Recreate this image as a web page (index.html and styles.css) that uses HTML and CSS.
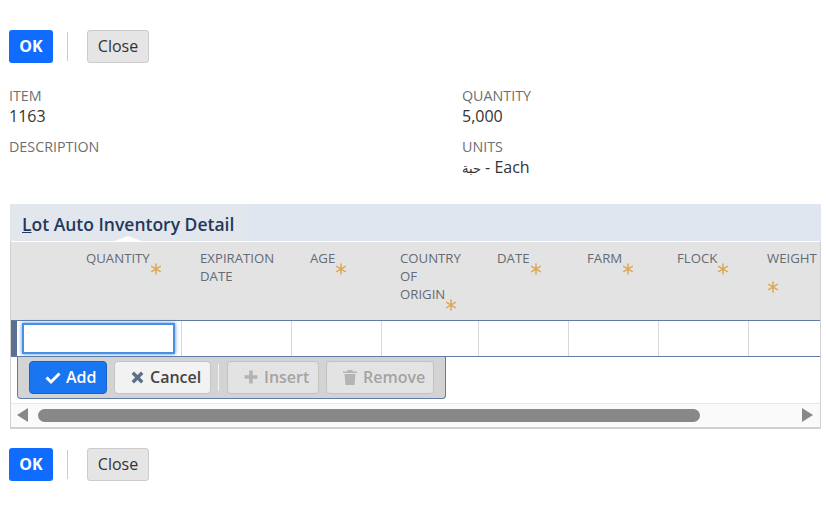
FILE: index.html
```html
<!DOCTYPE html>
<html>
<head>
    <title>Lot Auto Inventory Detail</title>
    <link rel="stylesheet" href="styles.css">
</head>
<body>
    <svg class="defs" width="0" height="0">
        <symbol id="star" viewBox="0 0 12 12">
            <path d="M6 0.5V11.5M1.2 3.2L10.8 8.8M10.8 3.2L1.2 8.8" stroke="#dba755" stroke-width="1.5" fill="none"/>
        </symbol>
    </svg>

    <div class="toolbar">
        <button class="btn btn-ok">OK</button>
        <span class="divider"></span>
        <button class="btn btn-close">Close</button>
    </div>

    <div class="fields">
        <div class="field-col">
            <div class="field">
                <div class="field-label">ITEM</div>
                <div class="field-value">1163</div>
            </div>
            <div class="field">
                <div class="field-label">DESCRIPTION</div>
            </div>
        </div>
        <div class="field-col">
            <div class="field">
                <div class="field-label">QUANTITY</div>
                <div class="field-value">5,000</div>
            </div>
            <div class="field">
                <div class="field-label">UNITS</div>
                <div class="field-value"><span class="arabic">حبة</span> - Each</div>
            </div>
        </div>
    </div>

    <div class="section">
        <div class="tab-band">
            <div class="tab"><span class="tab-key">L</span>ot Auto Inventory Detail</div>
        </div>
        <div class="grid-box">
            <div class="head-row">
                <div class="head-cell col-qty">QUANTITY<svg class="star"><use href="#star"/></svg></div>
                <div class="head-cell col-exp">EXPIRATION DATE</div>
                <div class="head-cell col-age">AGE<svg class="star"><use href="#star"/></svg></div>
                <div class="head-cell col-country">COUNTRY OF ORIGIN<svg class="star"><use href="#star"/></svg></div>
                <div class="head-cell col-std">DATE<svg class="star"><use href="#star"/></svg></div>
                <div class="head-cell col-std">FARM<svg class="star"><use href="#star"/></svg></div>
                <div class="head-cell col-std">FLOCK<svg class="star"><use href="#star"/></svg></div>
                <div class="head-cell col-last">WEIGHT<svg class="star"><use href="#star"/></svg></div>
            </div>
            <div class="edit-row">
                <div class="edit-cell col-qty"><input class="qty-input" type="text"></div>
                <div class="edit-cell col-exp"></div>
                <div class="edit-cell col-age"></div>
                <div class="edit-cell col-country"></div>
                <div class="edit-cell col-std"></div>
                <div class="edit-cell col-std"></div>
                <div class="edit-cell col-std"></div>
                <div class="edit-cell col-last"></div>
            </div>
            <div class="action-bar">
                <button class="act act-add">
                    <svg class="act-icon" viewBox="0 0 16 16"><path d="M1.5 8.5L6 13L14.5 4.5" stroke="#fff" stroke-width="3" fill="none"/></svg>Add
                </button>
                <button class="act act-cancel">
                    <svg class="act-icon" viewBox="0 0 16 16"><path d="M3 3L13 13M13 3L3 13" stroke="#5b6f87" stroke-width="3.6" fill="none"/></svg>Cancel
                </button>
                <span class="act-sep"></span>
                <button class="act act-off act-insert">
                    <svg class="act-icon" viewBox="0 0 16 16"><path d="M8 1.500V14.500M1.500 8H14.500" stroke="#b4b4b4" stroke-width="3.6" fill="none"/></svg>Insert
                </button>
                <button class="act act-off act-remove">
                    <svg class="act-icon" viewBox="0 0 16 16"><path d="M1 2.500H15V4H1ZM5.500 1H10.500V2.500H5.500ZM2.500 5H13.500L12.500 16H3.500Z" fill="#b4b4b4"/></svg>Remove
                </button>
            </div>
            <div class="scroll-row">
                <span class="arrow arrow-left"></span>
                <div class="scroll-track"><div class="scroll-thumb"></div></div>
                <span class="arrow arrow-right"></span>
            </div>
        </div>
    </div>

    <div class="toolbar toolbar-bottom">
        <button class="btn btn-ok">OK</button>
        <span class="divider"></span>
        <button class="btn btn-close">Close</button>
    </div>
</body>
</html>
```

FILE: styles.css
```css
body {
    font-family: "Open Sans", "DejaVu Sans", sans-serif;
    background-color: #fff;
    color: #333;
    margin: 0;
    padding: 30px 5px 0 9px;
}

.defs {
    display: block;
    height: 0;
}

.toolbar {
    display: flex;
    align-items: center;
    height: 33px;
}

.toolbar-bottom {
    margin-top: 19px;
}

.btn {
    height: 33px;
    padding: 0 0 2px;
    font-family: inherit;
    font-size: 16px;
    border-radius: 3px;
}

.btn-ok {
    width: 44px;
    background-color: #0f6cff;
    border: none;
    color: #fff;
    font-weight: 700;
}

.btn-close {
    width: 62px;
    background-color: #e5e5e5;
    border: 1px solid #ccc;
    color: #333;
}

.divider {
    width: 1px;
    height: 29px;
    margin: 0 19px 0 14px;
    background-color: #ccc;
}

.fields {
    display: grid;
    grid-template-columns: 453px 1fr;
    margin-top: 24px;
}

.field {
    margin-bottom: 11px;
}

.field-label {
    font-size: 14.300px;
    line-height: 18px;
    color: #6f6f6f;
}

.field-value {
    font-size: 16px;
    line-height: 22px;
    color: #333;
}

.arabic {
    font-size: 13px;
}

.section {
    margin-top: 14px;
    margin-left: 1px;
    width: 811px;
}

.tab-band {
    height: 37px;
    background-color: #dfe6f0;
}

.tab {
    position: relative;
    box-sizing: border-box;
    width: 237px;
    height: 37px;
    padding-left: 12px;
    font-size: 17.500px;
    font-weight: 600;
    line-height: 40px;
    color: #24385b;
    background-color: #e2e6ed;
    white-space: nowrap;
}

.tab-key {
    text-decoration: underline;
}

.tab::after {
    content: "";
    position: absolute;
    left: 105px;
    bottom: 0;
    border-left: 13px solid transparent;
    border-right: 13px solid transparent;
    border-bottom: 5px solid #fff;
}

.grid-box {
    box-sizing: border-box;
    height: 188px;
    border: 1px solid #d0d0d0;
    border-bottom-width: 2px;
    border-top: none;
    overflow: hidden;
}

.head-row {
    display: flex;
    height: 79px;
    box-sizing: border-box;
    background-color: #e3e3e3;
    border-top: 1px solid #fff;
}

.head-cell {
    box-sizing: border-box;
    padding-top: 7px;
    padding-left: 18px;
    padding-right: 3px;
    font-size: 13.200px;
    line-height: 18px;
    color: #666a73;
}

.col-qty {
    width: 171px;
    flex: none;
}

.col-exp {
    width: 110px;
    flex: none;
}

.col-age {
    width: 90px;
    flex: none;
}

.col-country {
    width: 97px;
    flex: none;
}

.col-std {
    width: 90px;
    flex: none;
}

.col-last {
    width: 70px;
    flex: none;
}

.head-row .col-qty {
    padding-left: 75px;
}

.head-row .col-country {
    padding-right: 16px;
}

.head-row .col-last {
    padding-right: 0;
}

.star {
    display: inline-block;
    width: 12px;
    height: 12px;
    vertical-align: -6px;
    margin-bottom: -6px;
}

.edit-row {
    display: flex;
    box-sizing: border-box;
    height: 37px;
    border-top: 1px solid #5f7ba6;
    border-bottom: 1px solid #5f7ba6;
}

.edit-cell {
    box-sizing: border-box;
    border-right: 1px solid #d8d8d8;
}

.edit-row .col-qty {
    padding: 2px 5px 0;
    border-left: 6px solid #5d6f91;
}

.edit-row .col-last {
    border-right: none;
}

.qty-input {
    display: block;
    box-sizing: border-box;
    width: 153px;
    height: 31px;
    border: 2px solid #4a90e2;
    box-shadow: 0 0 4px #4a90e2;
    outline: none;
    background-color: #fff;
}

.action-bar {
    display: flex;
    align-items: flex-start;
    box-sizing: border-box;
    width: 429px;
    height: 42px;
    margin-left: 6px;
    padding: 4px 0 0 11px;
    background-color: #d3d3d3;
    border: 1px solid #5f7ba6;
    border-top: none;
    border-radius: 0 0 4px 4px;
}

.act {
    display: flex;
    align-items: center;
    box-sizing: border-box;
    height: 33px;
    padding: 0 0 1px 15px;
    gap: 5px;
    font-family: inherit;
    font-size: 16px;
    font-weight: 600;
    border-radius: 4px;
}

.act-icon {
    flex: none;
    width: 16px;
    height: 16px;
}

.act-add {
    width: 78px;
    background-color: #1a76f0;
    border: 1px solid #1862c6;
    color: #fff;
}

.act-cancel {
    width: 97px;
    margin-left: 7px;
    background-color: #f2f2f2;
    border: 1px solid #c4c4c4;
    color: #444;
}

.act-cancel .act-icon {
    width: 15px;
    height: 15px;
}

.act-sep {
    width: 1px;
    height: 27px;
    margin: 3px 8px 0 7px;
    background-color: #f4f4f4;
}

.act-off {
    background-color: #e3e3e3;
    border: 1px solid #c2c2c2;
    color: #a3a3a3;
}

.act-insert {
    width: 92px;
}

.act-remove {
    width: 108px;
    margin-left: 7px;
}

.scroll-row {
    display: flex;
    align-items: center;
    box-sizing: border-box;
    height: 25px;
    margin-top: 4px;
    padding: 0 7px 2px 6px;
    background-color: #fafafa;
    border-top: 1px solid #e8e8e8;
}

.arrow {
    flex: none;
    width: 0;
    height: 0;
    border-top: 7px solid transparent;
    border-bottom: 7px solid transparent;
}

.arrow-left {
    border-right: 11px solid #888;
}

.arrow-right {
    border-left: 11px solid #888;
}

.scroll-track {
    flex: 1;
    margin: 0 0 0 10px;
    padding-right: 102px;
}

.scroll-thumb {
    height: 13px;
    background-color: #888;
    border-radius: 7px;
}
```
